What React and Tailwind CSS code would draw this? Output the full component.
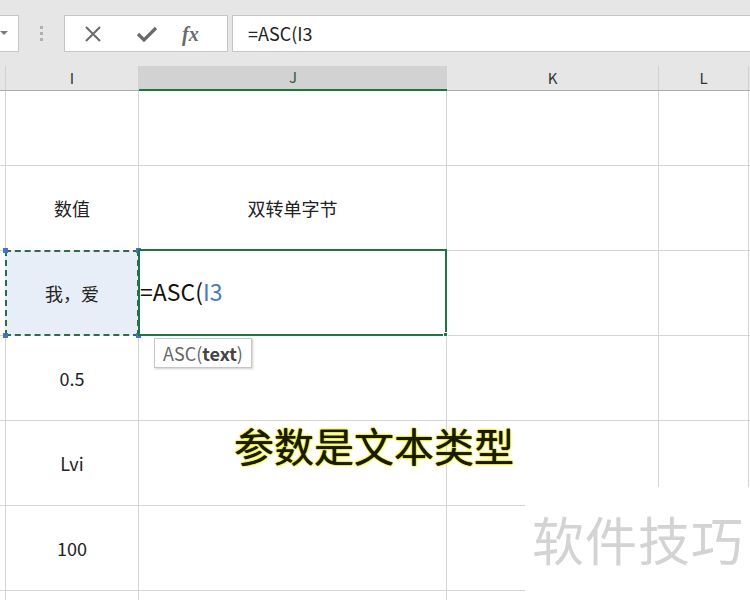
import React from "react";

const font = { fontFamily: '"Noto Sans CJK SC", "Noto Sans", sans-serif' };

const rows = [
  { h: "h-[75px]", i: "", j: "" },
  { h: "h-[85px]", i: "数值", j: "双转单字节" },
  { h: "h-[85px]", i: "我，爱", j: "" },
  { h: "h-[85px]", i: "0.5", j: "" },
  { h: "h-[85px]", i: "Lvi", j: "" },
  { h: "h-[85px]", i: "100", j: "" },
  { h: "h-[85px]", i: "", j: "" },
];

const Row = ({ r }) => (
  <div className={`flex ${r.h} border-b border-[#d4d4d4] text-[18px] text-[#222]`}>
    <div className="w-[6px] shrink-0 border-r border-[#d4d4d4]" />
    <div className="w-[133px] shrink-0 border-r border-[#d4d4d4] flex items-center justify-center">
      {r.i}
    </div>
    <div className="w-[308px] shrink-0 border-r border-[#d4d4d4] flex items-center justify-center">
      {r.j}
    </div>
    <div className="w-[212px] shrink-0 border-r border-[#d4d4d4]" />
    <div className="w-[90px] shrink-0 border-r border-[#d4d4d4]" />
    <div className="flex-1" />
  </div>
);

export default function App() {
  return (
    <div className="w-[750px] h-[600px] overflow-hidden bg-white relative" style={font}>
      {/* formula bar */}
      <div className="h-[66px] bg-[#e6e6e6] flex items-start pt-[15px]">
        <div className="w-[19px] h-[37px] bg-white border border-l-0 border-[#c6c6c6] flex items-center">
          <svg width="10" height="6" viewBox="0 0 10 6">
            <path d="M0 0 L8 0 L4 4 Z" fill="#7a7a7a" />
          </svg>
        </div>
        <div className="w-[45px] h-[37px] flex flex-col items-center justify-center gap-[3px]">
          <div className="w-[3px] h-[3px] bg-[#b0b0b0]" />
          <div className="w-[3px] h-[3px] bg-[#b0b0b0]" />
          <div className="w-[3px] h-[3px] bg-[#b0b0b0]" />
        </div>
        <div className="w-[164px] h-[37px] bg-white border border-[#c6c6c6] flex items-center">
          <svg width="20" height="20" viewBox="0 0 20 20" className="ml-[18px]">
            <path d="M3 3 L17 17 M17 3 L3 17" stroke="#6a6a6a" strokeWidth="2" />
          </svg>
          <svg width="22" height="20" viewBox="0 0 22 20" className="ml-[33px]">
            <path d="M2 10 L8 16 L20 4" stroke="#6a6a6a" strokeWidth="3.2" fill="none" />
          </svg>
          <span
            className="ml-[24px] text-[20px] italic font-bold text-[#6a6a6a] leading-none"
            style={{ fontFamily: '"Liberation Serif", serif' }}
          >
            fx
          </span>
        </div>
        <div className="ml-[4px] flex-1 h-[37px] bg-white border border-r-0 border-[#c6c6c6] flex items-center pl-[15px] text-[18px] text-[#222]">
          =ASC(I3
        </div>
      </div>

      {/* column headers */}
      <div className="flex h-[25px] bg-[#e6e6e6] border-b border-[#ababab] text-[15px] text-[#333]">
        <div className="w-[6px] shrink-0 border-r border-[#d0d0d0]" />
        <div className="w-[133px] shrink-0 flex items-center justify-center border-r border-[#d0d0d0]">I</div>
        <div className="w-[308px] shrink-0 flex items-center justify-center bg-[#d2d2d2] border-b-2 border-[#217346] -mb-px text-[#2e5b42]">
          J
        </div>
        <div className="w-[212px] shrink-0 flex items-center justify-center border-r border-[#d0d0d0]">K</div>
        <div className="w-[90px] shrink-0 flex items-center justify-center border-r border-[#d0d0d0]">L</div>
        <div className="flex-1" />
      </div>

      {/* sheet */}
      <div className="relative">
        {rows.map((r, k) => (
          <Row key={k} r={r} />
        ))}

        {/* I3 copy marquee */}
        <div className="absolute left-[5px] top-[159px] w-[134px] h-[86px] bg-white">
          <div className="w-full h-full border-2 border-dashed border-[#2f6b4b] bg-[#e8eef8] flex items-center justify-center text-[18px] text-[#222]">
            我，爱
          </div>
          <div className="absolute -left-[2px] -top-[2px] w-[5px] h-[5px] bg-[#4472c4]" />
          <div className="absolute -right-[2px] -top-[2px] w-[5px] h-[5px] bg-[#4472c4]" />
          <div className="absolute -left-[2px] -bottom-[2px] w-[5px] h-[5px] bg-[#4472c4]" />
          <div className="absolute -right-[2px] -bottom-[2px] w-[5px] h-[5px] bg-[#4472c4]" />
        </div>

        {/* J3 active cell */}
        <div className="absolute left-[138px] top-[158px] w-[309px] h-[87px] border-2 border-[#217346] bg-white flex items-center">
          <span className="text-[23px] text-[#111] leading-none -mt-[2px]">
            =ASC(<span className="text-[#4a7ab8]">I3</span>
          </span>
          <div className="absolute -right-[3px] -bottom-[3px] w-[5px] h-[5px] bg-[#217346] border border-white" />
        </div>

        {/* tooltip */}
        <div className="absolute left-[154px] top-[247px] h-[30px] px-[8px] bg-white border border-[#c6c6c6] shadow-[1px_1px_2px_rgba(0,0,0,0.2)] flex items-center text-[18px] text-[#666]">
          ASC(<b className="text-[#444]">text</b>)
        </div>

        {/* caption */}
        <div
          className="absolute left-[234px] top-[334px] text-[40px] leading-none text-[#1a1a00] font-normal"
          style={{
            textShadow:
              "0 0 1px #1a1a00, 0 0 2px #ffff40, 1px 1px 2px #ffff40, -1px -1px 2px #ffff40",
          }}
        >
          参数是文本类型
        </div>

        {/* watermark patch */}
        <div className="absolute left-[525px] top-[396px] w-[225px] h-[120px] bg-white flex items-start pt-[26px] pl-[7px]">
          <span className="text-[52px] leading-none text-[#d3d3d3] tracking-[1px]">软件技巧</span>
        </div>
      </div>
    </div>
  );
}
